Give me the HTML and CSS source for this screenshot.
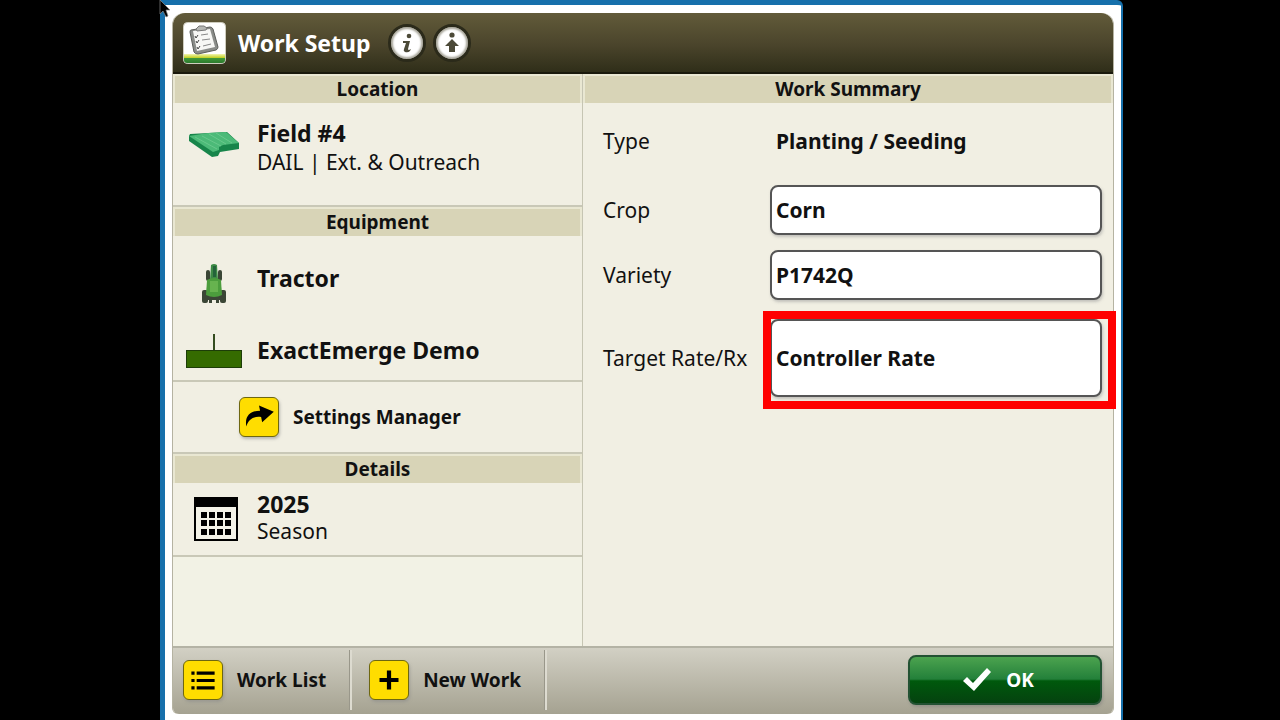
FILE: index.html
```html
<!DOCTYPE html>
<html lang="en">
<head>
    <meta charset="utf-8">
    <title>Work Setup</title>
    <link rel="stylesheet" href="styles.css">
</head>

<body>
    <svg class="cursor" width="16" height="20" viewBox="0 0 16 20" aria-hidden="true">
        <path d="M1 0 V14 L4 11 L7 17 L9 16 L7 10 H11 Z" fill="#000" stroke="#888" stroke-width="0.7"/>
    </svg>

    <div class="frame">
        <div class="panel">
            <header class="title-bar">
                <svg class="app-icon" viewBox="0 0 43 42" aria-hidden="true">
                    <defs>
                        <linearGradient id="band" x1="0" y1="0" x2="0" y2="1">
                            <stop offset="0" stop-color="#f2f5b0"/>
                            <stop offset="0.4" stop-color="#c3d22a"/>
                            <stop offset="0.5" stop-color="#3e9638"/>
                            <stop offset="1" stop-color="#2c7a2d"/>
                        </linearGradient>
                    </defs>
                    <rect x="0.5" y="0.5" width="42" height="41" rx="4" fill="#fff" stroke="#cfcdbf"/>
                    <path d="M1 32 H42 V38 Q42 41 39 41 H4 Q1 41 1 38 Z" fill="url(#band)"/>
                    <path d="M8 8 L27 5 Q29 5 30 7 L35 25 Q35 27 33 28 L15 32 Q12 32 11 30 L7 10 Q7 8 8 8 Z" fill="#8a8c89" stroke="#5c5e5b"/>
                    <path d="M10 9 L27 7 L32 25 L14 29 Z" fill="#f7f7f5"/>
                    <path d="M13 7 L16 4 L21 4 L24 6 L23 8 L14 9 Z" fill="#b5b7b4" stroke="#777"/>
                    <path d="M12 14 l1 2 l2 -3 M13 19 l1 2 l2 -3 M14 25 l1 2 l2 -3" fill="none" stroke="#444"/>
                    <path d="M18 13 L25 12 M19 18 L27 17 M20 24 L28 22" stroke="#888" stroke-width="1"/>
                </svg>
                <h1>Work Setup</h1>
                <button class="round-btn" aria-label="Information">
                    <svg viewBox="0 0 28 28">
                        <circle cx="16" cy="7" r="2.3"/>
                        <path d="M10 12 H17 L15 20 Q15 21 16 21 L18 20 L17 22 Q15 24 12 23 Q10 22 11 20 L13 14 Q11 14 10 14 Z"/>
                    </svg>
                </button>
                <button class="round-btn" aria-label="Move up">
                    <svg viewBox="0 0 28 28">
                        <circle cx="14" cy="6" r="2.6"/>
                        <path d="M14 10 L21 17 H17 V23 H11 V17 H7 Z"/>
                    </svg>
                </button>
            </header>

            <main class="columns">
                <div class="left">
                    <section>
                        <h2>Location</h2>
                        <div class="item location">
                            <svg class="icon" viewBox="0 -4 58 44" aria-hidden="true">
                                <path d="M4 7 V12 L27 28 L33 27 L35 23 L54 20 V14 L42 3 L5 5 Z" fill="#17854a"/>
                                <path d="M4 7 L23 4 L41 3 L54 14 L38 16 L34 18 L34 21 L28 23 Z" fill="#4cba78"/>
                                <path d="M10 8 L32 20 M17 7 L36 17 M24 5 L41 15 M31 4 L47 14" stroke="#68c98c" stroke-width="1"/>
                            </svg>
                            <div>
                                <strong>Field #4</strong>
                                <p>DAIL | Ext. &amp; Outreach</p>
                            </div>
                        </div>
                    </section>

                    <section>
                        <h2>Equipment</h2>
                        <div class="item machine">
                            <svg class="icon" viewBox="0 -12 58 52" aria-hidden="true">
                                <g fill="#3b4636">
                                    <rect x="21" y="6" width="4" height="11" rx="2"/>
                                    <rect x="33" y="6" width="4" height="11" rx="2"/>
                                    <rect x="17" y="26" width="6" height="13" rx="2"/>
                                    <rect x="35" y="26" width="6" height="13" rx="2"/>
                                    <rect x="22" y="31" width="14" height="5"/>
                                    <rect x="24" y="33" width="3" height="6"/>
                                    <rect x="31" y="33" width="3" height="6"/>
                                </g>
                                <path d="M26 1 Q29 -1 32 1 L33 16 H25 Z" fill="#3d8a45"/>
                                <path d="M28 2 H31 V13 H28 Z" fill="#24633a"/>
                                <path d="M22 16 Q29 12 36 16 L37 31 Q29 35 21 31 Z" fill="#4c9d3d"/>
                                <path d="M25 17 H33 V28 H25 Z" fill="#67b34f"/>
                            </svg>
                            <strong>Tractor</strong>
                        </div>
                        <div class="item machine">
                            <svg class="icon" viewBox="0 0 58 40" aria-hidden="true">
                                <path d="M29 4 V21" stroke="#354d20" stroke-width="2"/>
                                <rect x="1.5" y="20.5" width="55" height="17" fill="#356b00" stroke="#1d3d08"/>
                            </svg>
                            <strong>ExactEmerge Demo</strong>
                        </div>
                    </section>

                    <section>
                        <button class="link-btn settings">
                            <span class="tile">
                                <svg viewBox="0 0 36 36">
                                    <path d="M6 27 C4 16 11 12 19 12 L18 7 L32 13 L21 23 L20 18 C13 17 8 20 6 27 Z"/>
                                </svg>
                            </span>
                            Settings Manager
                        </button>
                    </section>

                    <section>
                        <h2>Details</h2>
                        <div class="item season">
                            <svg class="icon" viewBox="0 0 58 46" aria-hidden="true">
                                <rect x="10" y="2" width="42" height="42" fill="#f4f3e8" stroke="#000" stroke-width="2"/>
                                <path d="M9 1 H53 V11 H9 Z"/>
                                <path d="M16 16 h6 v6 h-6 z m8 0 h6 v6 h-6 z m8 0 h6 v6 h-6 z m8 0 h6 v6 h-6 z M16 24 h6 v6 h-6 z m8 0 h6 v6 h-6 z m8 0 h6 v6 h-6 z m8 0 h6 v6 h-6 z M16 33 h6 v6 h-6 z m8 0 h6 v6 h-6 z m8 0 h6 v6 h-6 z m8 0 h6 v6 h-6 z"/>
                            </svg>
                            <div>
                                <strong>2025</strong>
                                <p>Season</p>
                            </div>
                        </div>
                    </section>
                </div>

                <div class="right">
                    <h2>Work Summary</h2>
                    <div class="row type">
                        <span>Type</span>
                        <strong>Planting / Seeding</strong>
                    </div>
                    <div class="row">
                        <label for="crop">Crop</label>
                        <input type="text" id="crop" value="Corn">
                    </div>
                    <div class="row">
                        <label for="variety">Variety</label>
                        <input type="text" id="variety" value="P1742Q">
                    </div>
                    <div class="row rate">
                        <label for="rate">Target Rate/Rx</label>
                        <div class="highlight">
                            <input type="text" id="rate" value="Controller Rate">
                        </div>
                    </div>
                </div>
            </main>

            <footer class="actions">
                <button class="link-btn">
                    <span class="tile">
                        <svg viewBox="0 0 36 36">
                            <path d="M7 10 h3 v3 h-3 z M12 10 h17 v3 h-17 z M7 17 h3 v3 h-3 z M12 17 h17 v3 h-17 z M7 24 h3 v3 h-3 z M12 24 h17 v3 h-17 z"/>
                        </svg>
                    </span>
                    Work List
                </button>
                <button class="link-btn">
                    <span class="tile">
                        <svg viewBox="0 0 36 36">
                            <path d="M16 9 h4 v7 h7 v4 h-7 v7 h-4 v-7 h-7 v-4 h7 z"/>
                        </svg>
                    </span>
                    New Work
                </button>
                <button class="ok-btn">
                    <svg viewBox="0 0 30 26" aria-hidden="true">
                        <path d="M1 14 L5 10 L11 16 L25 1 L29 5 L12 24 Z" fill="#fff"/>
                    </svg>
                    OK
                </button>
            </footer>
        </div>
    </div>
</body>
</html>
```
FILE: styles.css
```css
* {
    box-sizing: border-box;
}

body {
    margin: 0;
    min-height: 100vh;
    display: flex;
    background: #000;
    color: #111;
    font-family: "Noto Sans", sans-serif;
    font-size: 21px;
    line-height: 28px;
}

h1, h2, p {
    margin: 0;
}

button {
    border: none;
    font: inherit;
    font-weight: bold;
    cursor: pointer;
}

.cursor {
    position: absolute;
    top: 0;
    left: 159px;
}

.frame {
    flex: 1;
    display: flex;
    margin: 0 157px 0 160px;
    padding: 8px 7px 6px;
    background: #fff;
    border: solid #1670ab;
    border-width: 5px 2px 0 5px;
    border-radius: 0 6px 0 0;
}

.panel {
    flex: 1;
    display: flex;
    flex-direction: column;
    border: 1px solid #b5b3a2;
    border-width: 0 1px;
    border-radius: 12px 12px 6px 6px;
    background: #f1efe3;
}

/* Title bar */
.title-bar {
    display: flex;
    align-items: center;
    height: 61px;
    padding: 0 10px;
    background: linear-gradient(#625b3a, #4a442b 55%, #2f2e19);
    border-bottom: 2px solid #1a190c;
    border-radius: 12px 12px 0 0;
}

.app-icon {
    width: 43px;
    height: 42px;
    margin-right: 12px;
}

.title-bar h1 {
    margin-right: 17px;
    font-size: 23px;
    color: #fff;
}

.round-btn {
    width: 38px;
    height: 38px;
    margin-right: 7px;
    padding: 2px;
    border: 3px solid #2b2a1a;
    border-radius: 50%;
    background: #fff;
    box-shadow: inset 0 0 2px 2px #aaa89c;
}

.round-btn svg {
    display: block;
    fill: #4c4a38;
}

/* Columns */
.columns {
    flex: 1;
    display: grid;
    grid-template-columns: 410fr 530fr;
}

.left {
    border-right: 1px solid #c6c5b3;
    background: #f2f2e5;
}

.left section {
    border-bottom: 2px solid #c9c8b7;
    background: #f1efe3;
}

h2 {
    border: 2px solid #e9e7d2;
    border-bottom: none;
    background: #d8d4b7;
    font-size: 19px;
    line-height: 27px;
    text-align: center;
}

.item {
    display: flex;
    align-items: center;
    padding: 0 12px;
}

.item .icon {
    width: 58px;
    margin-right: 14px;
}

.item strong {
    font-size: 23px;
    line-height: 30px;
}

.location {
    height: 102px;
    padding-bottom: 14px;
}

.machine {
    height: 72px;
    padding-top: 12px;
}

.season {
    height: 72px;
}

.season div {
    padding-bottom: 6px;
}

.season p {
    line-height: 24px;
}

.link-btn {
    display: flex;
    align-items: center;
    gap: 14px;
    padding: 0;
    background: none;
    color: #111;
    font-size: 19px;
}

.settings {
    height: 70px;
    margin-left: 66px;
}

.tile {
    width: 40px;
    height: 40px;
    border: 1px solid #6e6710;
    border-radius: 6px;
    background: #fd0;
    box-shadow: 1px 2px 3px #8888;
}

.tile svg {
    display: block;
}

/* Summary form */
.right h2 {
    margin-bottom: 14px;
}

.row {
    display: grid;
    grid-template-columns: 167px 1fr;
    align-items: center;
    margin: 0 11px 15px 20px;
}

.type {
    height: 48px;
    margin-bottom: 20px;
}

.type strong {
    padding-left: 6px;
}

input {
    display: block;
    width: 100%;
    height: 50px;
    padding: 0 4px;
    border: 2px solid #555;
    border-radius: 8px;
    background: #fff;
    box-shadow: 1px 2px 3px #9998;
    color: #111;
    font: inherit;
    font-weight: bold;
}

.rate {
    margin-top: 19px;
}

.rate input {
    height: 78px;
}

.highlight {
    position: relative;
}

.highlight::after {
    content: "";
    position: absolute;
    inset: -8px -14px -12px -7px;
    border: 8px solid #f00;
    pointer-events: none;
}

/* Footer */
.actions {
    display: flex;
    align-items: center;
    height: 68px;
    padding: 0 11px 2px 10px;
    border-top: 2px solid #b4b3a5;
    border-radius: 0 0 6px 6px;
    background: linear-gradient(#d2d0c4, #a5a291);
}

.actions .link-btn {
    height: 60px;
    margin-right: 17px;
    padding-right: 24px;
    border-right: 2px solid #dddbd0;
    box-shadow: -1px 0 #99978a inset;
}

.ok-btn {
    display: flex;
    align-items: center;
    justify-content: center;
    gap: 14px;
    width: 194px;
    height: 50px;
    margin-left: auto;
    padding: 0 20px 0 6px;
    border: 2px solid #235233;
    border-radius: 8px;
    background: linear-gradient(#4ca34f, #23803a 48%, #00590c 52%, #04420f);
    box-shadow: 1px 2px 3px #7777;
    color: #fff;
    font-size: 19px;
}

.ok-btn svg {
    width: 30px;
}
```
